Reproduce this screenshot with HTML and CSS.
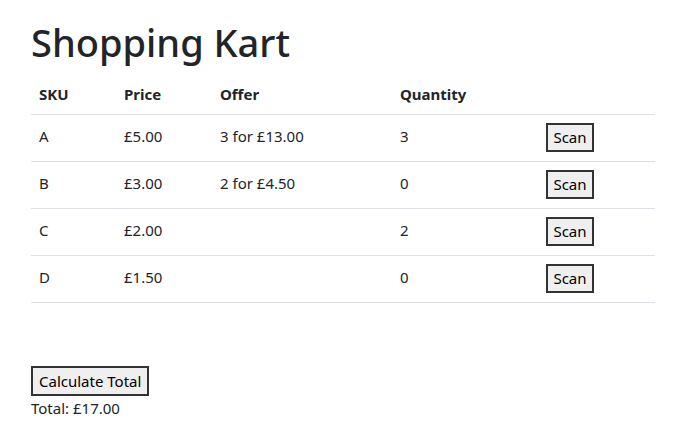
FILE: index.html
```html
<!DOCTYPE html>
<html>
<head>
<meta charset="utf-8">
<link rel="stylesheet" href="styles.css">
</head>
<body>
<main class="page">
  <h1 class="title">Shopping Kart</h1>
  <table class="kart">
    <thead>
      <tr><th class="c1">SKU</th><th class="c2">Price</th><th class="c3">Offer</th><th class="c4">Quantity</th><th class="c5"></th></tr>
    </thead>
    <tbody>
      <tr><td>A</td><td>£5.00</td><td>3 for £13.00</td><td>3</td><td class="act"><button class="btn scan">Scan</button></td></tr>
      <tr><td>B</td><td>£3.00</td><td>2 for £4.50</td><td>0</td><td class="act"><button class="btn scan">Scan</button></td></tr>
      <tr><td>C</td><td>£2.00</td><td></td><td>2</td><td class="act"><button class="btn scan">Scan</button></td></tr>
      <tr><td>D</td><td>£1.50</td><td></td><td>0</td><td class="act"><button class="btn scan">Scan</button></td></tr>
    </tbody>
  </table>
  <div class="footer">
    <button class="btn calc">Calculate Total</button>
    <div class="total">Total: £17.00</div>
  </div>
</main>
</body>
</html>
```

FILE: styles.css
```css
html, body {
  margin: 0;
  padding: 0;
  background: #fff;
}
body {
  font-family: "Noto Sans", "Open Sans", sans-serif;
  font-size: 15px;
  color: #212529;
}
.page {
  padding: 21px 35px 0 31px;
}
.title {
  margin: 0;
  font-size: 38px;
  font-weight: 500;
  line-height: 43px;
  color: #212529;
}
.kart {
  width: 624px;
  border-collapse: collapse;
  table-layout: fixed;
}
.kart th,
.kart td {
  box-sizing: border-box;
}
.c1 { width: 85px; }
.c2 { width: 96px; }
.c3 { width: 180px; }
.c4 { width: 146px; }
.c5 { width: 117px; }
.kart th {
  text-align: left;
  font-weight: 700;
  padding: 19px 8px 8px 8px;
  line-height: 23px;
  border-bottom: 1px solid #dee2e6;
}
.kart td {
  padding: 10px 8px 14px 8px;
  line-height: 22px;
  vertical-align: top;
  border-bottom: 1px solid #dee2e6;
  font-weight: 400;
}
.btn {
  font-family: inherit;
  font-size: 15px;
  color: #000;
  background: #efefef;
  border: 2px solid #333;
  border-radius: 0;
  box-sizing: border-box;
  margin: 0;
}
.scan {
  width: 48px;
  height: 29px;
  padding: 0;
  line-height: 25px;
  margin: -2px 0 -5px 0;
  vertical-align: top;
}
.footer {
  margin-top: 63px;
}
.calc {
  height: 30px;
  padding: 0 6px;
  line-height: 26px;
}
.total {
  line-height: 22px;
  margin-top: 1px;
}
```
